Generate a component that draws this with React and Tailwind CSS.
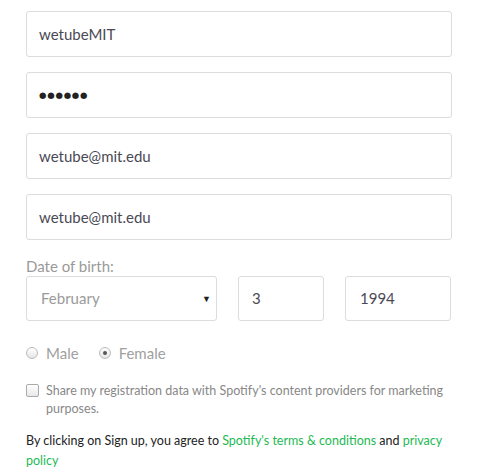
import React from 'react';

function Field({ value, className = '' }) {
  return (
    <div className={`h-[46px] border border-[#dcdce0] rounded-[3px] bg-white flex items-center px-[12px] text-[15px] text-[#4a4a55] ${className}`}>
      {value}
    </div>
  );
}

export default function App() {
  return (
    <div className="w-[494px] h-[474px] bg-white pl-[26px] pt-[11px] font-['Lato',sans-serif]">
      <div className="w-[426px] flex flex-col gap-[15px]">
        <Field value="wetubeMIT" />
        <Field value={<span className="text-[8.5px] tracking-[0.8px] text-[#222] font-['DejaVu_Sans',sans-serif]">●●●●●●</span>} />
        <Field value="wetube@mit.edu" />
        <Field value="wetube@mit.edu" />
      </div>

      <div className="mt-[17px] text-[15px] text-[#9a9a9a] leading-[18px]">Date of birth:</div>
      <div className="mt-[1px] flex items-center w-[425px]">
        <div className="w-[191px] h-[45px] border border-[#dcdce0] rounded-[3px] flex items-center justify-between pl-[14px] pr-[5px] text-[15px] text-[#9a9a9a]">
          <span>February</span>
          <span className="text-[9px] text-[#222]">▼</span>
        </div>
        <div className="ml-[21px] w-[86px] h-[45px] border border-[#dcdce0] rounded-[3px] flex items-center px-[13px] text-[15px] text-[#4a4a55]">3</div>
        <div className="ml-[21px] w-[106px] h-[45px] border border-[#dcdce0] rounded-[3px] flex items-center px-[14px] text-[15px] text-[#4a4a55]">1994</div>
      </div>

      <div className="mt-[21px] flex items-center text-[15px] text-[#a0a0a0]">
        <span className="w-[12px] h-[12px] rounded-full border border-[#bbb] bg-gradient-to-b from-[#fff] to-[#e6e6e6]" />
        <span className="ml-[8px]">Male</span>
        <span className="ml-[20px] w-[12px] h-[12px] rounded-full border border-[#bbb] bg-gradient-to-b from-[#fff] to-[#e6e6e6] flex items-center justify-center">
          <span className="w-[4px] h-[4px] rounded-full bg-[#555]" />
        </span>
        <span className="ml-[8px]">Female</span>
      </div>

      <div className="mt-[17px] flex items-start w-[426px]">
        <span className="mt-[2px] shrink-0 w-[13px] h-[13px] rounded-[2px] border border-[#aaa] bg-gradient-to-b from-[#fff] to-[#e8e8e8]" />
        <p className="ml-[7px] text-[12.5px] leading-[18px] text-[#888]">
          Share my registration data with Spotify's content providers for marketing purposes.
        </p>
      </div>

      <p className="mt-[13px] w-[426px] text-[12.5px] leading-[20px] text-[#222]">
        By clicking on Sign up, you agree to <a className="text-[#1db954]">Spotify's terms &amp; conditions</a> and <a className="text-[#1db954]">privacy</a>
        <br />
        <a className="text-[#1db954]">policy</a>
      </p>
    </div>
  );
}
